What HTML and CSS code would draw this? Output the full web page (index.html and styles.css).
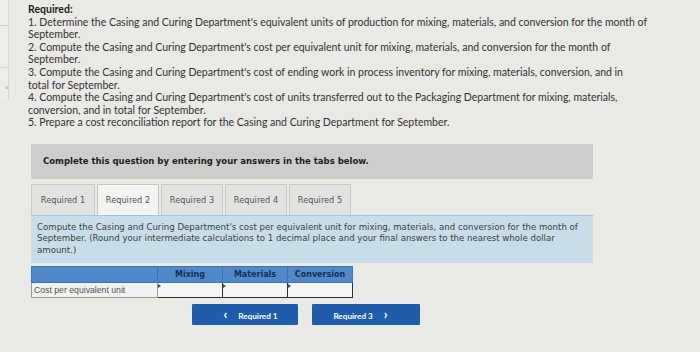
FILE: index.html
```html
<html>
    <head>
        <link rel="stylesheet" href="styles.css">
    </head>
    <body>
        <div class="page">
            <!--left side panel edge-->
            <div class="side_strip">
                <div class="side_cell"></div>
                <div class="side_cell"></div>
                <div class="side_cell side_mark">s</div>
            </div>

            <div class="main">
                <div class="question_text">
                    <div class="required_title">Required:</div>
                    <div>1. Determine the Casing and Curing Department's equivalent units of production for mixing, materials, and conversion for the month of September.</div>
                    <div>2. Compute the Casing and Curing Department's cost per equivalent unit for mixing, materials, and conversion for the month of September.</div>
                    <div>3. Compute the Casing and Curing Department's cost of ending work in process inventory for mixing, materials, conversion, and in<br>total for September.</div>
                    <div>4. Compute the Casing and Curing Department's cost of units transferred out to the Packaging Department for mixing, materials, conversion, and in total for September.</div>
                    <div>5. Prepare a cost reconciliation report for the Casing and Curing Department for September.</div>
                </div>

                <div class="answer_area">
                    <div class="banner">Complete this question by entering your answers in the tabs below.</div>

                    <!--Tabs-->
                    <div class="tabs">
                        <div class="tab">Required 1</div>
                        <div class="tab tab_active">Required 2</div>
                        <div class="tab">Required 3</div>
                        <div class="tab">Required 4</div>
                        <div class="tab">Required 5</div>
                    </div>

                    <div class="instructions">
                        Compute the Casing and Curing Department's cost per equivalent unit for mixing, materials, and conversion for the month of September. (Round your intermediate calculations to 1 decimal place and your final answers to the nearest whole dollar amount.)
                    </div>

                    <!--Answer table-->
                    <table class="answer_table">
                        <tr>
                            <th class="label_col"></th>
                            <th class="value_col">Mixing</th>
                            <th class="value_col">Materials</th>
                            <th class="value_col">Conversion</th>
                        </tr>
                        <tr>
                            <td class="row_label">Cost per equivalent unit</td>
                            <td class="input_cell"><span class="cell_marker"></span></td>
                            <td class="input_cell"><span class="cell_marker"></span></td>
                            <td class="input_cell"><span class="cell_marker"></span></td>
                        </tr>
                    </table>

                    <!--Navigation-->
                    <div class="nav_buttons">
                        <div class="nav_button"><span class="chevron">&lsaquo;</span>Required 1</div>
                        <div class="nav_button nav_next">Required 3<span class="chevron">&rsaquo;</span></div>
                    </div>
                </div>
            </div>
        </div>
    </body>
</html>
```

FILE: styles.css
```css
html,body{
    border:0;
    margin:0;
    padding:0;
}

body{
    background: #e9e9e6;
    width: 700px;
    height: 352px;
    overflow: hidden;
}

.page{
    display: flex;
    height: 352px;
}

.side_strip{
    width: 8px;
    border-right: 1px solid #d6d6d3;
    background: #ededeb;
    height: 100px;
}

.side_cell{
    height: 25px;
    border-bottom: 1px solid #d3d3d0;
}

.side_cell:nth-child(2){
    height: 41px;
}

.side_mark{
    border-bottom: 0;
    font-family: "DejaVu Sans", sans-serif;
    font-size: 5px;
    color: #8a8a8a;
    text-align: right;
    padding-top: 16px;
    height: auto;
}

.main{
    padding-left: 19px;
    flex: 1;
}

.question_text{
    font-family: "Lato", "Open Sans", sans-serif;
    font-size: 10.5px;
    line-height: 12.6px;
    color: #333;
    padding-top: 3px;
    width: 624px;
}

.required_title{
    font-weight: bold;
    color: #1e1e1e;
}

.answer_area{
    margin-left: 3px;
    width: 562px;
    margin-top: 15px;
}

.banner{
    background: #cdcdcb;
    height: 35px;
    line-height: 35px;
    padding-left: 12px;
    font-family: "DejaVu Sans", Verdana, sans-serif;
    font-weight: bold;
    font-size: 8.5px;
    color: #1d1d1d;
}

.tabs{
    display: flex;
    gap: 2px;
    margin-top: 5px;
}

.tab{
    height: 31px;
    line-height: 31px;
    width: 62px;
    text-align: center;
    font-family: "DejaVu Sans", Verdana, sans-serif;
    font-size: 8.2px;
    color: #555;
    background: #e2e2e0;
    border: 1px solid #cacac8;
    border-bottom: 0;
    box-sizing: border-box;
}

.tab:first-child{
    width: 64px;
}

.tab_active{
    background: #f3f3f1;
    border-color: #c4c4c2;
}

.instructions{
    background: #c8dde8;
    border-top: 1px solid #a9c3d2;
    padding: 6px 6px 0 6px;
    height: 41px;
    font-family: "DejaVu Sans", Verdana, sans-serif;
    font-size: 8.6px;
    line-height: 11.5px;
    color: #3a3f44;
}

.answer_table{
    border-collapse: collapse;
    margin-top: 3px;
    font-family: "DejaVu Sans", Verdana, sans-serif;
}

.answer_table th{
    background: #4f89c9;
    height: 16px;
    padding: 0;
    font-size: 8px;
    font-weight: bold;
    color: #1a2f55;
    border: 1px solid #3f74ad;
    box-sizing: border-box;
}

.label_col{
    width: 126px;
}

.value_col{
    width: 65px;
}

.answer_table td{
    height: 15px;
    padding: 0;
    box-sizing: border-box;
}

.row_label{
    background: #f1f1ef;
    border: 1px solid #9a9a98;
    font-family: "Liberation Sans", Arial, sans-serif;
    font-size: 8.7px;
    color: #555;
    padding-left: 2px !important;
}

.input_cell{
    background: #f5f5f3;
    border: 1.5px solid #303030;
    position: relative;
    vertical-align: top;
}

.cell_marker{
    position: absolute;
    top: 1px;
    left: 0;
    width: 0;
    height: 0;
    border-top: 2px solid transparent;
    border-bottom: 2px solid transparent;
    border-left: 3px solid #1f4f8f;
}

.nav_buttons{
    display: flex;
    justify-content: center;
    gap: 14px;
    margin-top: 6px;
    padding-right: 12px;
}

.nav_button{
    width: 106px;
    height: 21px;
    line-height: 21px;
    background: #1f5dab;
    border-radius: 1px;
    color: #fff;
    font-family: "Lato", "Open Sans", sans-serif;
    font-weight: bold;
    font-size: 8.2px;
    text-align: center;
}

.nav_next{
    width: 108px;
}

.chevron{
    font-size: 13px;
    font-weight: 900;
    margin: 0 11px;
    position: relative;
    top: 0.5px;
}
```
